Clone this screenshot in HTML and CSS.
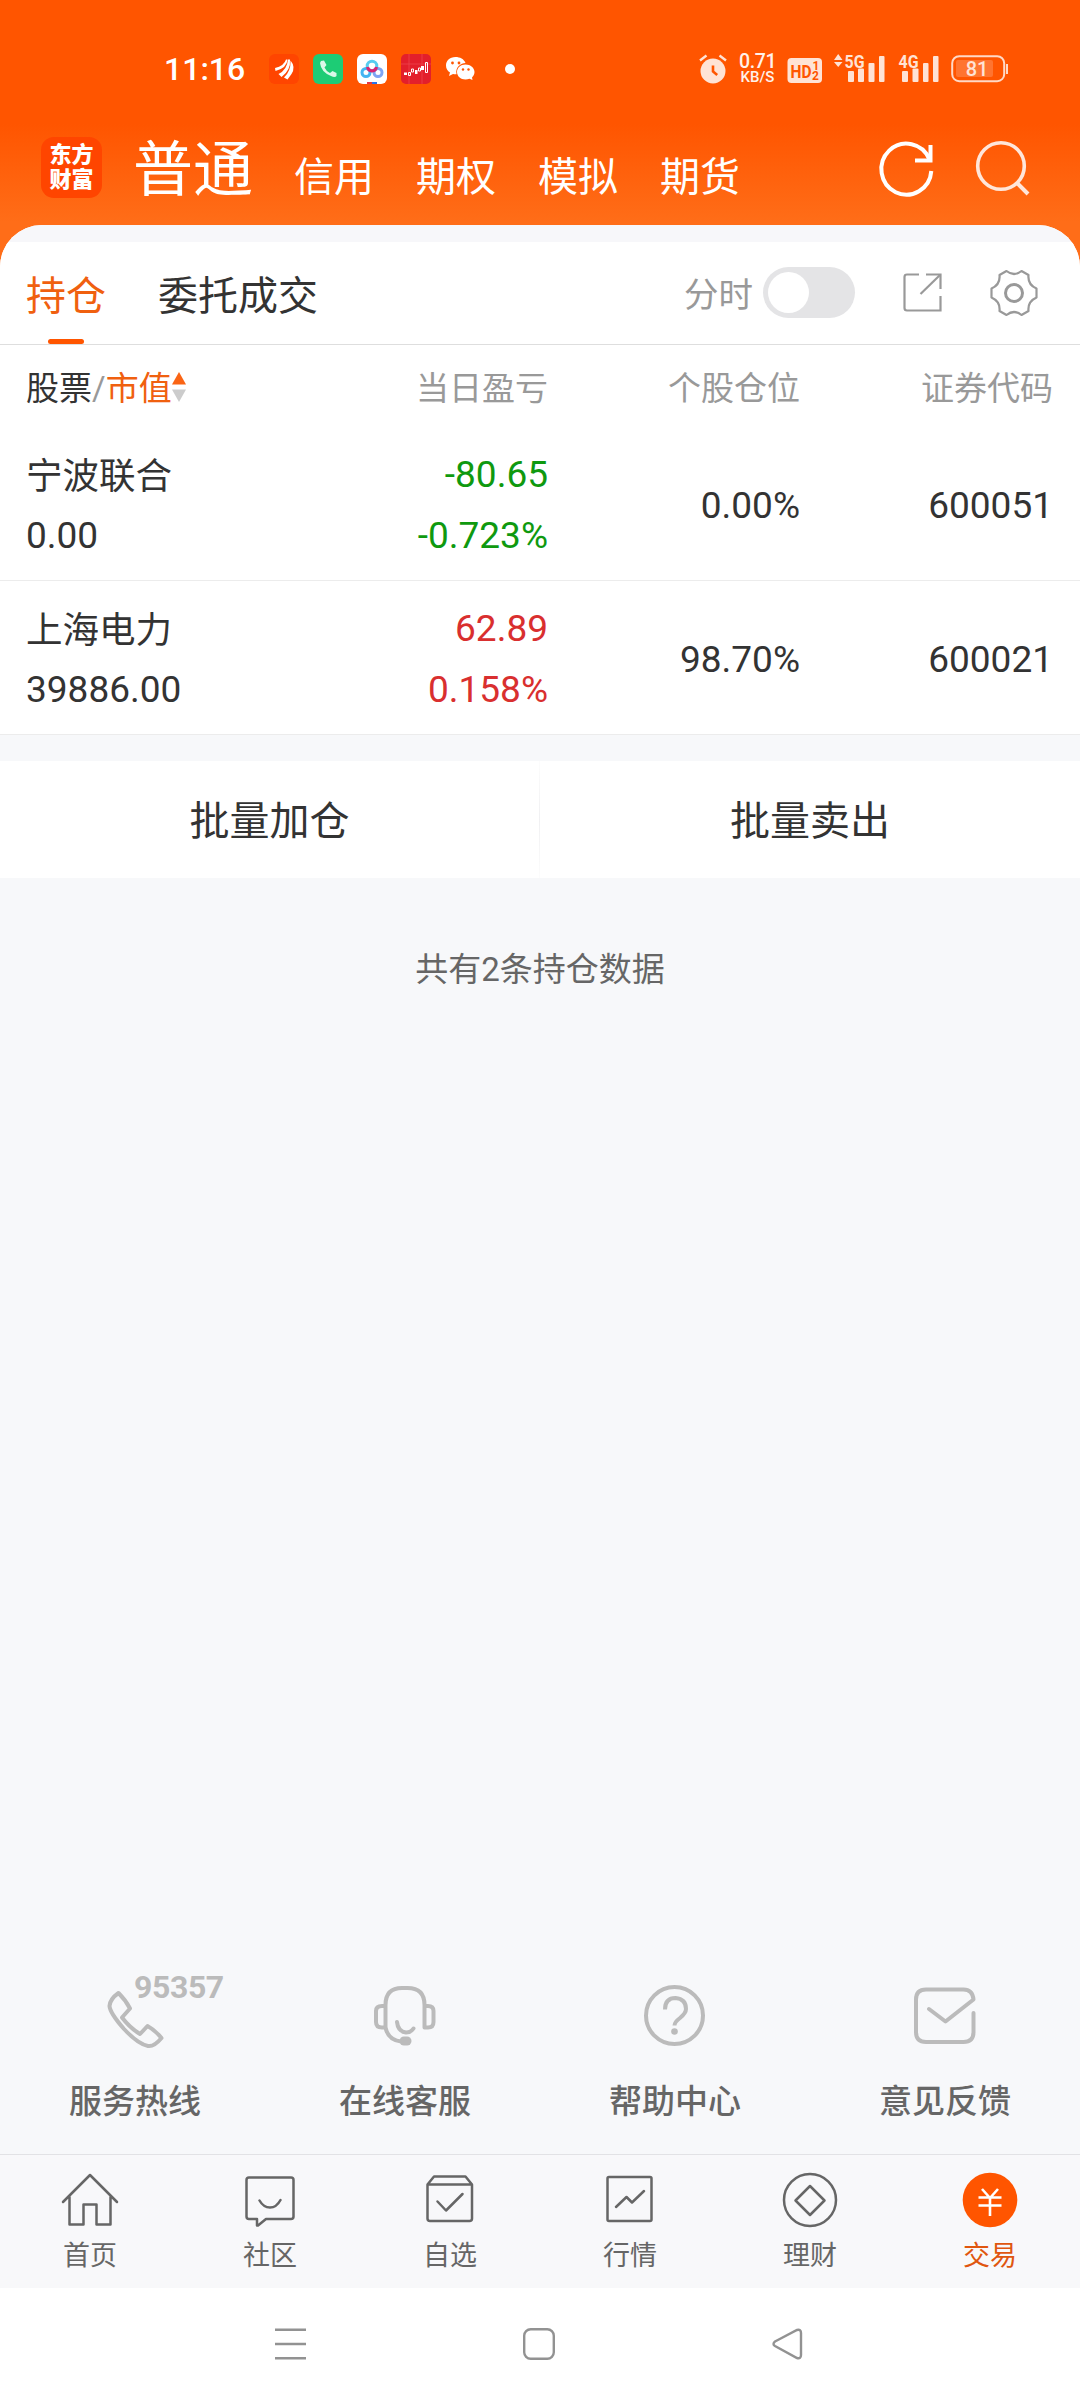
FILE: index.html
```html
<!DOCTYPE html>
<html lang="zh-CN">
<head>
<meta charset="utf-8">
<title>交易 - 持仓</title>
<link rel="stylesheet" href="styles.css">
</head>
<body>
<header class="top">
  <div class="status">
    <span class="clock">11:16</span>
    <div class="notices">
      <svg width="30" height="30" viewBox="0 0 30 30"><rect width="30" height="30" rx="6" fill="#ff4500"/><path d="M6 14Q15 12 17 5.500L18.500 5.500Q18 14 6.500 17ZM9.500 20Q18 16 19 5.500L21 5.500Q22 16 12.500 23ZM15 23.500Q22 17 21.500 6.500Q27 13 22.500 20L18.500 25.500Z" fill="#fff"/></svg>
      <svg width="30" height="30" viewBox="0 0 30 30"><rect width="30" height="30" rx="6" fill="#1dcc75"/><path d="M8 7L11 6.500L13.500 11L11.500 13.500Q13 17 17 19L19.500 17L23.500 19V22Q22 24 18 22Q8 18 7 9Z" fill="#d9f8e8"/></svg>
      <svg width="30" height="30" viewBox="0 0 30 30"><rect width="30" height="30" rx="6" fill="#fff"/><g fill="none" stroke-width="3"><circle cx="9" cy="18.500" r="4" stroke="#45b5f2"/><circle cx="21" cy="18.500" r="4" stroke="#7fa4f3"/><circle cx="15" cy="12" r="4.800" stroke="#56cdf0"/><path d="M10.500 13Q11 16.500 15 17Q19 16.500 19.500 13" stroke="#d92573"/></g><path d="M10 28h5v2h-5z" fill="#e33646"/><path d="M15 28h5v2h-5z" fill="#2674ec"/></svg>
      <svg width="30" height="30" viewBox="0 0 30 30"><rect width="30" height="30" rx="5" fill="#e31f2b"/><path d="M0 10h30M8 0v30M21 0v30" stroke="#ee4850" stroke-width=".7"/><path d="M3 18.500h3v2.500H3zM14 16h2.500v4H14zM20 12h3v4h-3z" fill="#fff"/><path d="M7.500 18.500h2v3h-2zM10.500 15h2v3h-2zM17.500 14h2v3h-2zM24.500 8.500h2v10h-2z" stroke="#fff" fill="none"/></svg>
      <svg width="30" height="30" viewBox="0 0 30 30"><path d="M10.500 3C4.500 3 1 7 1 11.500C1 14.500 2.500 17 5 18.500L4 22L8 20Q10 20.500 11.500 20.300C10 13 16 9 20.500 9C19 5 15 3 10.500 3Z" fill="#fff"/><path d="M20.500 10.500C15.500 10.500 12 14 12 18C12 22 15.500 25.500 20.500 25.500Q22.500 25.500 24.500 24.800L27.500 26L27 23.500C28.500 22 29.500 20 29.500 18C29.500 14 25.500 10.500 20.500 10.500Z" fill="#fff"/><g fill="#ff5500"><circle cx="7.500" cy="9" r="1.400"/><circle cx="14" cy="9" r="1.400"/><circle cx="18" cy="15.500" r="1.200"/><circle cx="23.500" cy="15.500" r="1.200"/></g></svg>
      <i class="dot"></i>
    </div>
    <svg class="alarm" width="28" height="30" viewBox="0 0 28 30"><circle cx="14" cy="17" r="12.500" fill="#ffe3d5"/><path d="M1 6.500L7.500 1.500M20.500 1.500L27 6.500" stroke="#ffe3d5" stroke-width="2.400"/><path d="M14 11.500v6l4.200 3.500" fill="none" stroke="#ff5500" stroke-width="2.600"/></svg>
    <div class="speed"><span>0.71</span><span>KB/S</span></div>
    <svg class="hd" width="36" height="30" viewBox="0 0 36 30"><rect x=".5" y="4" width="34.500" height="25" rx="4" fill="#ffe3d5"/><g fill="#ff5500" font-weight="700"><text x="3.500" y="23.500" font-size="19" textLength="21" lengthAdjust="spacingAndGlyphs">HD</text><text x="25.500" y="15.500" font-size="12">1</text><text x="25" y="26" font-size="12">2</text></g></svg>
    <svg class="sig5" width="52" height="30" viewBox="0 0 52 30"><g fill="#ffe3d5"><path d="M0 6L4.200 0L8.500 6ZM0 8L4.200 13L8.500 8Z"/><text x="10.500" y="13.500" font-size="18" font-weight="700" textLength="20" lengthAdjust="spacingAndGlyphs">5G</text><rect x="14" y="17" width="6" height="11" rx="1"/><rect x="24" y="14.500" width="6" height="13.500" rx="1"/><rect x="34.500" y="9" width="6" height="19" rx="1"/><rect x="45" y="2" width="5.500" height="26" rx="1"/></g></svg>
    <svg class="sig4" width="40" height="30" viewBox="0 0 40 30"><g fill="#ffe3d5"><text x="-.5" y="13.500" font-size="18" font-weight="700" textLength="20" lengthAdjust="spacingAndGlyphs">4G</text><rect x="3" y="17" width="6" height="11" rx="1"/><rect x="13.500" y="14.500" width="6" height="13.500" rx="1"/><rect x="24" y="9" width="5.500" height="19" rx="1"/><rect x="34" y="2" width="5.500" height="26" rx="1"/></g></svg>
    <svg class="battery" width="58" height="28" viewBox="0 0 58 28"><rect x="1.200" y="1.200" width="52" height="25" rx="7" fill="none" stroke="#ffd9c6" stroke-width="2"/><rect x="5" y="5" width="37" height="17" rx="2" fill="#ff7430"/><path d="M56 9v10" stroke="#ffd9c6" stroke-width="2"/><text x="26" y="21" font-size="20" font-weight="500" fill="#ffe3d5" text-anchor="middle">81</text></svg>
  </div>
  <div class="appbar">
    <div class="logo"><span>东方</span><span>财富</span></div>
    <nav class="accounts"><b>普通</b><a>信用</a><a>期权</a><a>模拟</a><a>期货</a></nav>
    <svg class="reload" width="54" height="58" viewBox="0 0 54 58"><path d="M49.500 20.500A25 25.500 0 1 0 51.300 32" fill="none" stroke="#fff" stroke-width="4"/><path d="M50.500 6V21.500H35" fill="none" stroke="#fff" stroke-width="4"/></svg>
    <svg class="search" width="54" height="58" viewBox="0 0 54 58"><circle cx="25" cy="28" r="23.300" fill="none" stroke="#ffe6da" stroke-width="3.600"/><path d="M40.500 44.500L52 56" stroke="#ffe6da" stroke-width="4"/></svg>
  </div>
</header>
<main class="sheet">
  <div class="tabs">
    <a class="tab on">持仓</a><a class="tab">委托成交</a>
    <span class="minute">分时</span><span class="switch"></span>
    <svg class="share" width="40" height="42" viewBox="0 0 40 42"><g fill="none" stroke="#999" stroke-width="2.200"><path d="M16 2.500H4Q1.500 2.500 1.500 5V36Q1.500 38.500 4 38.500H37.500V24M23 2.500H37.500V17"/><path d="M17.500 22L37 3"/></g></svg>
    <svg class="gear" width="48" height="48" viewBox="0 0 48 48"><g fill="none" stroke="#999" stroke-width="2.200" stroke-linejoin="round"><path d="M16.500 2Q24 8 31.500 2L38.500 6Q37.500 15.500 46.500 19.500V28.500Q37.500 32.500 38.500 42L31.500 46Q24 40 16.500 46L9.500 42Q10.500 32.500 1.500 28.500V19.500Q10.500 15.500 9.500 6Z"/><circle cx="24" cy="24" r="8.500" stroke-width="3"/></g></svg>
  </div>
  <div class="head grid">
    <span class="c1"><em>股票</em>/<strong>市值</strong><svg width="14" height="30" viewBox="0 0 14 30"><path d="M7 0L14 12.500H0Z" fill="#fa6414"/><path d="M0 17.500H14L7 30Z" fill="#ccc"/></svg></span>
    <span>当日盈亏</span><span>个股仓位</span><span>证券代码</span>
  </div>
  <div class="row grid">
    <div class="c1"><p class="name">宁波联合</p><p>0.00</p></div>
    <div class="down"><p>-80.65</p><p>-0.723%</p></div>
    <div>0.00%</div><div>600051</div>
  </div>
  <div class="row grid">
    <div class="c1"><p class="name">上海电力</p><p>39886.00</p></div>
    <div class="up"><p>62.89</p><p>0.158%</p></div>
    <div>98.70%</div><div>600021</div>
  </div>
</main>
<div class="batch"><button>批量加仓</button><button>批量卖出</button></div>
<p class="note">共有2条持仓数据</p>
<section class="services">
  <a><span class="pic"><svg width="62" height="62" viewBox="0 0 62 62"><path d="M14.500 8Q22 15.500 26 23.500L18 32.500Q26 43 36 49L43.500 41Q51 45 57.500 53Q50 62 44 61Q34 59 20 44Q6 28 5.500 21Q6 14 14.500 8Z"/></svg><span class="hot">95357</span></span>服务热线</a>
  <a><span class="pic"><svg width="62" height="62" viewBox="0 0 62 62"><path d="M11.500 42.500V20Q11.500 3 28 3H33.500Q50.500 3 50.500 20V42.500H54Q59.500 42.500 59.500 37V26Q59.500 21 54 21H50.500M11.500 21H8Q2 21 2 26V37Q2 42.500 8 42.500H11.500Q14 55 27 56.500M23 37Q24 46.500 32 47.500Q37 47.500 39.500 43.500"/><rect x="25.500" y="51.500" width="12" height="9" rx="4.500" class="solid"/></svg></span>在线客服</a>
  <a><span class="pic"><svg width="62" height="62" viewBox="0 0 62 62"><circle cx="30.500" cy="30.500" r="28.500"/><path class="butt" d="M21 24.500Q21 13 31.500 13Q42 14 42 24Q42 28 36 33Q30.500 37 30.500 40.500"/><circle cx="30.500" cy="46.500" r="3.300" class="solid"/></svg></span>帮助中心</a>
  <a><span class="pic"><svg width="62" height="62" viewBox="0 0 62 62"><path d="M59.500 28V47Q59.500 57 49.500 57H12Q2 57 2 47V14.500Q2 4.500 12 4.500H49.500Q58.500 4.500 59.500 14.500L31.500 36.500L15 24"/></svg></span>意见反馈</a>
</section>
<nav class="bottom">
  <a><svg width="56" height="60" viewBox="0 0 56 60"><path d="M1 32L28 5L55 32M7.500 27V54.500H21.500V34.500H34.500V54.500H48.500V27"/></svg>首页</a>
  <a><svg width="56" height="60" viewBox="0 0 56 60"><path d="M7 7.500H49Q51.500 7.500 51.500 10V46.500Q51.500 49 49 49H24L16 55.500H15V49H7Q4.500 49 4.500 46.500V10Q4.500 7.500 7 7.500ZM17.500 30.500Q21.500 37.500 28 37.500Q34.500 37.500 38.500 30"/></svg>社区</a>
  <a><svg width="56" height="60" viewBox="0 0 56 60"><path d="M5.500 14.500H50V48.500Q50 51 47.500 51H8Q5.500 51 5.500 48.500ZM5.500 14.500L12 6.500H43.500L50 14.500M15.500 31.500L24 40.500L40.500 24"/></svg>自选</a>
  <a><svg width="56" height="60" viewBox="0 0 56 60"><rect x="5.500" y="7" width="44" height="44" rx="1.500"/><path d="M14 37L24.500 27L30 32.500L42 21"/></svg>行情</a>
  <a><svg width="56" height="60" viewBox="0 0 56 60"><circle cx="28" cy="30" r="26"/><path d="M28 16L42.500 30.500L28 45L13.500 30.500Z"/></svg>理财</a>
  <a class="on"><svg width="56" height="60" viewBox="0 0 56 60"><circle cx="28" cy="30" r="27.300" class="disc"/><path class="yen" d="M20 19L28 28L36 19M16.500 27.500H39.500M16.500 35.500H39.500M28 28V46"/></svg>交易</a>
</nav>
<footer class="keys">
  <svg width="31" height="32" viewBox="0 0 31 32"><path d="M0 1.800H31M0 16H31M0 30.200H31"/></svg>
  <svg width="32" height="32" viewBox="0 0 32 32"><rect x="1.200" y="1.200" width="29.600" height="29.600" rx="6.500"/></svg>
  <svg width="31" height="32" viewBox="0 0 31 32"><path d="M3 13.500L25 2Q29 1 29 5V27Q29 31 25 30L3 18Q0 16 3 13.500Z"/></svg>
</footer>
</body>
</html>
```
FILE: styles.css
```css
* { box-sizing: border-box; }
body {
  margin: 0; width: 1080px; height: 2400px;
  display: flex; flex-direction: column;
  background: #f7f8fa; color: #333;
  font-family: Roboto, "Noto Sans CJK SC", sans-serif;
}
p { margin: 0; }
svg { display: block; flex: none; overflow: visible; }

.top { height: 270px; background: linear-gradient(#ff5500 0, #ff5500 124px, #ff6d18 222px); flex: none; }
.status { height: 137px; display: flex; align-items: center; padding: 1px 71px 0 164px; }
.clock { width: 105px; color: #fff; font-size: 32px; font-weight: 500; line-height: 40px; }
.notices { display: flex; align-items: center; gap: 14px; }
.dot { width: 10px; height: 10px; margin-left: 16px; border-radius: 50%; background: #fff; }
.alarm { margin-left: auto; }
.speed { width: 37px; margin-left: 12px; color: #fff1ea; font-weight: 500; text-align: center; }
.speed span { display: block; font-size: 19.500px; line-height: 17px; letter-spacing: -.4px; }
.speed span + span { font-size: 15px; line-height: 15px; letter-spacing: 0; }
.hd { margin-left: 11px; }
.sig5 { margin-left: 11px; }
.sig4 { margin-left: 13px; }
.battery { margin-left: 12px; }

.appbar { display: flex; align-items: flex-start; padding: 0 50px 0 41px; }
.logo { width: 61px; height: 61px; padding-top: 5px; border-radius: 13px; background: #ff4500; color: #fff; font-size: 22px; font-weight: 900; line-height: 25px; text-align: center; }
.logo span { display: block; }
.accounts { display: flex; align-items: baseline; gap: 42px; margin: 3px auto 0 31px; color: #fff; font-size: 40px; line-height: 61px; }
.accounts b { font-size: 60px; font-weight: 400; margin-right: -1px; }
.reload { margin-top: 2px; }
.search { margin-left: 42px; margin-top: 1px; }

.sheet { position: relative; margin-top: -45px; border-radius: 42px 42px 0 0; background: #fff; overflow: hidden; flex: none; }
.tabs { height: 120px; padding: 17px 42px 0 26px; border-bottom: 1px solid #dedede; display: flex; align-items: center; background: linear-gradient(#f7f7fa 17px, #fff 17px); }
.tab { position: relative; margin-right: 52px; font-size: 40px; line-height: 95px; padding-top: 6px; }
.tab.on { color: #f0600f; }
.tab.on::after { content: ""; position: absolute; left: 22px; bottom: 0; width: 36px; height: 5px; border-radius: 3px; background: #ff5500; }
.minute { margin-left: auto; padding-top: 3px; color: #999; font-size: 34.500px; line-height: 50px; }
.switch { width: 92px; height: 51px; margin-left: 10px; padding: 5px; border-radius: 26px; background: #e4e4e6; }
.switch::before { content: ""; display: block; width: 41px; height: 41px; border-radius: 50%; background: #fff; }
.share { margin-left: 48px; }
.gear { margin-left: 47px; }
.switch, .share, .gear { margin-bottom: 1px; }

.grid { display: grid; grid-template-columns: 200px 321px 252px 253px; padding-left: 27px; align-items: center; text-align: right; }
.c1 { text-align: left; margin-left: -1px; }
.head { height: 82px; padding-top: 6px; font-size: 33px; line-height: 40px; color: #999; }
.head .c1 { display: flex; align-items: center; }
.head em { font-style: normal; color: #333; }
.head strong { font-weight: 400; color: #f0600f; }
.head svg { margin: -4px 0 0 0; }
.row { height: 154px; padding-top: 3px; border-bottom: 1px solid #ececec; font-size: 37px; line-height: 61px; }
.row .name { font-size: 36.500px; padding-top: 2px; margin-bottom: -2px; }
.down { color: #0f990f; }
.up { color: #d92f2f; }

.batch { display: grid; grid-template-columns: 539px 540px; gap: 1px; height: 117px; margin-top: 26px; background: linear-gradient(#fcfcfc, #f0f0f2, #fcfcfc); flex: none; }
.batch button { border: 0; padding: 5px 0 0; background: #fff; color: #333; font: inherit; font-size: 40px; line-height: 60px; }
.note { margin-top: 62px; font-size: 33px; line-height: 60px; text-align: center; color: #666; }

.services { margin-top: auto; height: 169px; display: grid; grid-template-columns: repeat(4, 270px); text-align: center; font-size: 33px; font-weight: 500; line-height: 45px; color: #666; flex: none; }
.pic { position: relative; display: block; width: 62px; height: 62px; margin: 0 auto 32px; }
.pic svg { fill: none; stroke: #bbb; stroke-width: 4; stroke-linejoin: round; stroke-linecap: round; }
.pic .solid { fill: #bbb; stroke: none; }
.pic .butt { stroke-linecap: butt; }
.hot { position: absolute; left: 30px; top: -12px; font-size: 32px; font-weight: 700; line-height: 28px; letter-spacing: -.4px; color: #bbb; }

.bottom { height: 134px; padding-top: 15px; border-top: 1px solid #e2e2e5; background: #f8f8fa; display: grid; grid-template-columns: repeat(6, 180px); font-size: 27px; line-height: 40px; text-align: center; color: #666; flex: none; }
.bottom svg { position: relative; left: -.5px; margin: 0 auto 6px; fill: none; stroke: #666; stroke-width: 2.500; stroke-linejoin: round; stroke-linecap: round; }
.bottom .on { color: #e0560f; }
.bottom .disc { fill: #ff5500; stroke: none; }
.bottom .yen { stroke: #fff; stroke-width: 2.600; stroke-linecap: butt; }

.keys { height: 112px; background: #fff; display: flex; align-items: flex-start; padding: 40px 0 0 275px; flex: none; }
.keys svg { fill: none; stroke: #929292; stroke-width: 2.400; margin-right: 217px; }
```
